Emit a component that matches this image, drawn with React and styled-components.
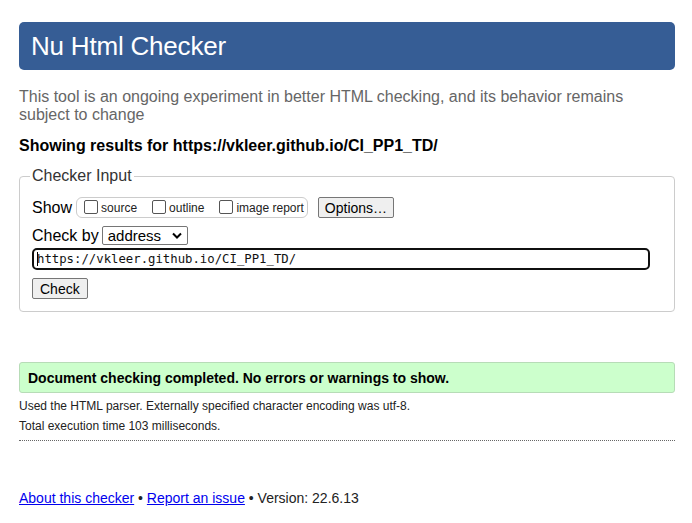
import React from 'react';
import styled, { createGlobalStyle } from 'styled-components';

const GlobalStyle = createGlobalStyle`
  body {
    margin: 0;
    background: #fff;
    font-family: "Liberation Sans", Arial, sans-serif;
    color: #000;
  }
`;

const Page = styled.div`
  padding: 22px 17px 0 19px;
`;

const Header = styled.h1`
  margin: 0;
  height: 48px;
  padding-left: 12px;
  display: flex;
  align-items: center;
  background: #365d95;
  color: #fff;
  font-size: 26px;
  font-weight: normal;
  letter-spacing: -0.2px;
  border-radius: 5px;
`;

const Intro = styled.p`
  margin: 18px 0 0;
  color: #666;
  font-size: 16px;
  line-height: 18px;
`;

const Showing = styled.p`
  margin: 13px 0 0;
  font-size: 16px;
  font-weight: bold;
`;

const Fieldset = styled.fieldset`
  margin: 12px 0 0;
  padding: 8px 12px 12px 12px;
  border: 1px solid #ccc;
  border-radius: 4px;
`;

const Legend = styled.legend`
  padding: 0 2px;
  margin-left: -2px;
  font-size: 16px;
  color: #333;
`;

const Row = styled.div`
  display: flex;
  align-items: center;
  gap: ${p => p.$gap || 4}px;
  margin-top: ${p => p.$top || 0}px;
`;

const Label = styled.span`
  font-size: 16px;
`;

const OptionGroup = styled.span`
  display: inline-flex;
  align-items: center;
  height: 19px;
  padding: 0 3px 0 7px;
  border: 1px solid #ccc;
  border-radius: 6px;
  gap: 15px;
`;

const CheckItem = styled.label`
  display: inline-flex;
  align-items: center;
  font-size: 12px;
  color: #222;
`;

const Box = styled.span`
  display: inline-block;
  width: 12px;
  height: 12px;
  border: 1px solid #555;
  border-radius: 2px;
  margin-right: 3px;
  position: relative;
  top: -1px;
`;

const Button = styled.button`
  font-family: "Liberation Sans", Arial, sans-serif;
  font-size: 14px;
  padding: 0 ${p => p.$pad || 7}px;
  margin-left: ${p => p.$left || 0}px;
  height: 21px;
  background: #efefef;
  border: 1px solid #767676;
  border-radius: 2px;
  color: #000;
`;

const Select = styled.span`
  display: inline-flex;
  align-items: center;
  justify-content: space-between;
  width: 86px;
  height: 19px;
  padding: 0 5px 0 5px;
  box-sizing: border-box;
  border: 1px solid #767676;
  border-radius: 2px;
  font-size: 15px;
`;

const UrlInput = styled.div`
  margin-top: 3px;
  height: 22px;
  box-sizing: border-box;
  width: 618px;
  border: 2px solid #101010;
  border-radius: 5px;
  padding: 0 3px;
  display: flex;
  align-items: center;
  font-family: "DejaVu Sans Mono", "Liberation Mono", monospace;
  font-size: 12.3px;
  color: #111;
`;

const Caret = styled.span`
  display: inline-block;
  width: 1px;
  height: 14px;
  background: #000;
  margin-right: -1px;
`;

const Success = styled.div`
  margin-top: 50px;
  height: 31px;
  box-sizing: border-box;
  padding-left: 8px;
  display: flex;
  align-items: center;
  background: #ccffcc;
  border: 1px solid #b7dcb7;
  border-radius: 3px;
  font-size: 14px;
  font-weight: bold;
`;

const Note = styled.p`
  margin: ${p => p.$top || 0}px 0 0;
  font-size: 12px;
  line-height: 14px;
  color: #222;
`;

const Rule = styled.hr`
  margin: 7px 0 0;
  border: 0;
  border-top: 1px dotted #666;
`;

const Footer = styled.p`
  margin: 49px 0 0;
  font-size: 14px;
  color: #222;

  a {
    color: #0000ee;
  }
`;

function Checkbox({ children }) {
  return (
    <CheckItem>
      <Box />
      {children}
    </CheckItem>
  );
}

export default function App() {
  return (
    <Page>
      <GlobalStyle />
      <Header>Nu Html Checker</Header>
      <Intro>
        This tool is an ongoing experiment in better HTML checking, and its behavior remains subject to change
      </Intro>
      <Showing>Showing results for https://vkleer.github.io/CI_PP1_TD/</Showing>
      <Fieldset>
        <Legend>Checker Input</Legend>
        <Row $top={4} $gap={4}>
          <Label>Show</Label>
          <OptionGroup>
            <Checkbox>source</Checkbox>
            <Checkbox>outline</Checkbox>
            <Checkbox>image report</Checkbox>
          </OptionGroup>
          <Button $left={6} $pad={6}>Options…</Button>
        </Row>
        <Row $top={8} $gap={3}>
          <Label>Check by</Label>
          <Select>
            address
            <svg width="10" height="7" viewBox="0 0 10 7">
              <path d="M1 1.5 L5 5.5 L9 1.5" fill="none" stroke="#000" strokeWidth="2" />
            </svg>
          </Select>
        </Row>
        <UrlInput>
          <Caret />https://vkleer.github.io/CI_PP1_TD/
        </UrlInput>
        <Row $top={8}>
          <Button $pad={7}>Check</Button>
        </Row>
      </Fieldset>
      <Success>Document checking completed. No errors or warnings to show.</Success>
      <Note $top={6}>Used the HTML parser. Externally specified character encoding was utf-8.</Note>
      <Note $top={6}>Total execution time 103 milliseconds.</Note>
      <Rule />
      <Footer>
        <a href="#about">About this checker</a> • <a href="#report">Report an issue</a> • Version: 22.6.13
      </Footer>
    </Page>
  );
}
